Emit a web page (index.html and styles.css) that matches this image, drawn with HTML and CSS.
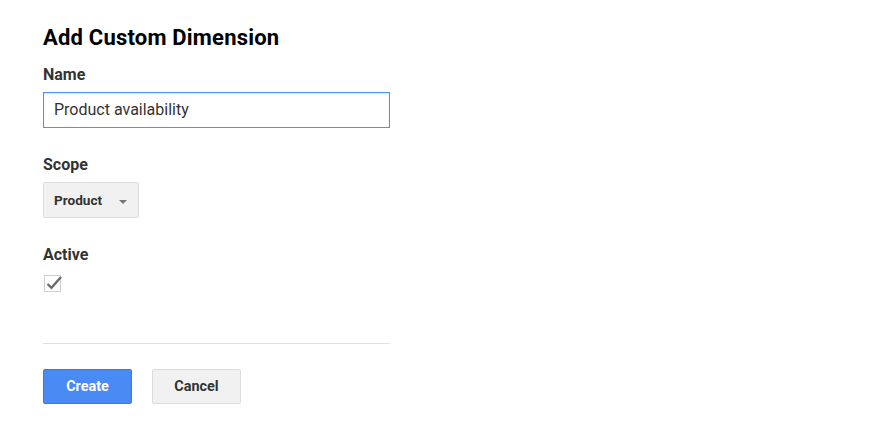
FILE: index.html
```html
<!DOCTYPE html>
<html>
<head>
<meta charset="utf-8">
<link rel="stylesheet" href="styles.css">
</head>
<body>
<div class="panel">
  <h1 class="title">Add Custom Dimension</h1>
  <div class="field name">
    <div class="label">Name</div>
    <div class="input">Product availability</div>
  </div>
  <div class="field scope">
    <div class="label">Scope</div>
    <div class="select"><span>Product</span><span class="caret"></span></div>
  </div>
  <div class="field active">
    <div class="label">Active</div>
    <div class="checkbox">
      <svg width="19" height="18" viewBox="0 0 19 18"><rect x="0.5" y="1.5" width="16" height="16" fill="#fff" stroke="#cfcfcf"/><path d="M3.5 10 L7.5 13.8 L17 3" fill="none" stroke="#6b6b6b" stroke-width="2.4"/></svg>
    </div>
  </div>
  <div class="divider"></div>
  <div class="actions">
    <div class="btn primary">Create</div>
    <div class="btn">Cancel</div>
  </div>
</div>
</body>
</html>
```
FILE: styles.css
```css
html, body { margin: 0; padding: 0; background: #fff; }
body { font-family: Roboto, "Liberation Sans", Arial, sans-serif; color: #333; }
.panel { padding: 24px 0 0 43px; width: 347px; }
.title { margin: 0; font-size: 22px; font-weight: 700; color: #000; line-height: 28px; letter-spacing: 0.2px; }
.name { margin-top: 13px; }
.label { font-size: 16px; font-weight: 700; color: #333; line-height: 20px; }
.input { margin-top: 7px; box-sizing: border-box; height: 36px; border: 1px solid #4d90fe; box-shadow: inset 0 1px 2px rgba(0,0,0,0.1); padding: 0 10px; font-size: 16px; line-height: 34px; color: #333; }
.scope { margin-top: 27px; }
.select { margin-top: 7px; display: flex; align-items: center; justify-content: space-between; box-sizing: border-box; width: 96px; height: 36px; border: 1px solid #dcdcdc; border-radius: 2px; background: #f1f1f1; padding: 0 10px; font-size: 13.6px; font-weight: 700; color: #333; }
.caret { width: 0; height: 0; border-left: 4.5px solid transparent; border-right: 4.5px solid transparent; border-top: 4.5px solid #777; margin-top: 3px; margin-right: 1px; }
.active { margin-top: 27px; }
.checkbox { margin-top: 9px; height: 18px; margin-left: 1px; }
.checkbox svg { display: block; }
.divider { margin-top: 51px; height: 1px; background: #e0e0e0; }
.actions { margin-top: 25px; display: flex; gap: 20px; }
.btn { box-sizing: border-box; width: 89px; height: 35px; border: 1px solid #dcdcdc; border-radius: 2px; background: #f1f1f1; font-size: 14.4px; font-weight: 700; color: #333; display: flex; align-items: center; justify-content: center; }
.btn.primary { background: #4a8af4; border-color: #3b78e7; color: #fff; }
```
